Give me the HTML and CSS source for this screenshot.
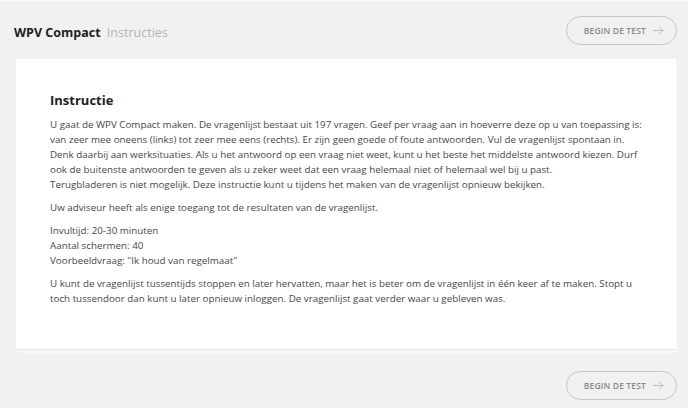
FILE: index.html
```html
<!DOCTYPE html>
<html lang="nl">
<head>
<meta charset="utf-8">
<title>WPV Compact - Instructies</title>
<link rel="stylesheet" href="styles.css">
</head>
<body>
<div class="page">
  <header class="topbar">
    <h1 class="title"><span class="title-main">WPV Compact</span> <span class="title-sub">Instructies</span></h1>
    <button class="btn-start" type="button">BEGIN DE TEST
      <svg class="arrow" viewBox="0 0 12 10" width="11" height="9" aria-hidden="true"><path d="M0.5 5 H11 M6.8 0.8 L11 5 L6.8 9.2" fill="none" stroke="currentColor" stroke-width="1.1" stroke-linecap="round" stroke-linejoin="round"/></svg>
    </button>
  </header>

  <main class="card">
    <h2 class="card-title">Instructie</h2>
    <p>U gaat de WPV Compact maken. De vragenlijst bestaat uit 197 vragen. Geef per vraag aan in hoeverre deze op u van toepassing is: van zeer mee oneens (links) tot zeer mee eens (rechts). Er zijn geen goede of foute antwoorden. Vul de vragenlijst spontaan in. Denk daarbij aan werksituaties. Als u het antwoord op een vraag niet weet, kunt u het beste het middelste antwoord kiezen. Durf ook de buitenste antwoorden te geven als u zeker weet dat een vraag helemaal niet of helemaal wel bij u past.<br>Terugbladeren is niet mogelijk. Deze instructie kunt u tijdens het maken van de vragenlijst opnieuw bekijken.</p>
    <p>Uw adviseur heeft als enige toegang tot de resultaten van de vragenlijst.</p>
    <p>Invultijd: 20-30 minuten<br>Aantal schermen: 40<br>Voorbeeldvraag: "Ik houd van regelmaat"</p>
    <p>U kunt de vragenlijst tussentijds stoppen en later hervatten, maar het is beter om de vragenlijst in één keer af te maken. Stopt u toch tussendoor dan kunt u later opnieuw inloggen. De vragenlijst gaat verder waar u gebleven was.</p>
  </main>

  <footer class="bottombar">
    <button class="btn-start" type="button">BEGIN DE TEST
      <svg class="arrow" viewBox="0 0 12 10" width="11" height="9" aria-hidden="true"><path d="M0.5 5 H11 M6.8 0.8 L11 5 L6.8 9.2" fill="none" stroke="currentColor" stroke-width="1.1" stroke-linecap="round" stroke-linejoin="round"/></svg>
    </button>
  </footer>
</div>
</body>
</html>
```

FILE: styles.css
```css
* { box-sizing: border-box; }

html, body {
  margin: 0;
  padding: 0;
  background: #f1f1f1;
}

body {
  font-family: "Open Sans", "Noto Sans", "Liberation Sans", sans-serif;
  color: #474747;
}

.page {
  border-top: 1px solid #fbfbfb;
  height: 408px;
  overflow: hidden;
}

.topbar {
  display: flex;
  justify-content: space-between;
  align-items: flex-start;
  padding: 15px 11px 0 14px;
  height: 58px;
}

.title {
  margin: 8px 0 0;
  font-size: 12.5px;
  line-height: 18px;
  font-weight: 400;
}

.title-main {
  font-weight: 700;
  color: #222;
}

.title-sub {
  color: #b3b3b3;
  margin-left: 3px;
}

.btn-start {
  display: inline-flex;
  align-items: center;
  gap: 7px;
  height: 29px;
  padding: 0 12px 0 17px;
  border: 1.5px solid #c4c4c4;
  border-radius: 15px;
  background: transparent;
  font-family: inherit;
  font-size: 8.6px;
  font-weight: 600;
  letter-spacing: 0.1px;
  color: #8a8a8a;
  cursor: pointer;
}

.arrow {
  color: #b8b8b8;
  display: block;
}

.card {
  margin: 0 12px 0 16px;
  background: #fff;
  padding: 32px 33px 42px 34px;
  height: 290px;
  box-shadow: 0 1px 0 #e6e6e6, 2px 5px 0 -1px #f7f7f7;
}

.card-title {
  margin: 0 0 8px;
  font-size: 13px;
  line-height: 18px;
  font-weight: 700;
  color: #222;
}

.card p {
  margin: 0 0 8px;
  font-size: 9.8px;
  line-height: 15px;
}

.bottombar {
  display: flex;
  justify-content: flex-end;
  padding: 22px 11px 0 0;
}
```
